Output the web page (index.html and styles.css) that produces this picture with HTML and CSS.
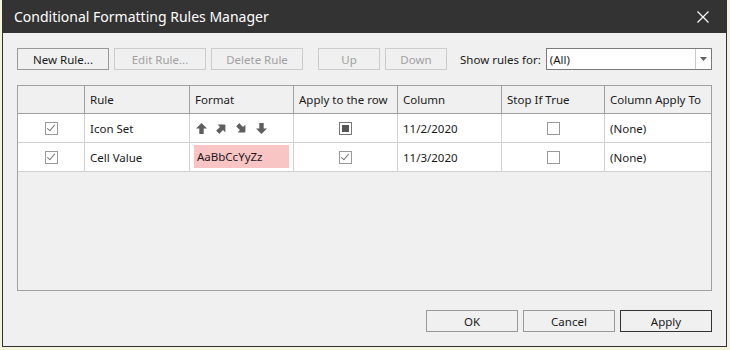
FILE: index.html
```html
<!DOCTYPE html>
<html lang="en">
<head>
  <meta charset="UTF-8">
  <title>Conditional Formatting Rules Manager</title>
  <link rel="stylesheet" href="styles.css">
</head>
<body>

<div class="dialog">
  <div class="titlebar">
    <span class="title">Conditional Formatting Rules Manager</span>
    <svg class="close" width="12" height="12" viewBox="0 0 12 12"><path d="M0.5 0.5 L11.5 11.5 M11.5 0.5 L0.5 11.5" stroke="#fff" stroke-width="1.2"/></svg>
  </div>

  <div class="content">
    <div class="toolbar">
      <button class="btn">New Rule...</button>
      <button class="btn disabled">Edit Rule...</button>
      <button class="btn disabled">Delete Rule</button>
      <button class="btn small disabled up">Up</button>
      <button class="btn small disabled">Down</button>
      <span class="label">Show rules for:</span>
      <div class="select">
        <span>(All)</span>
        <span class="arrow"><svg width="7" height="4" viewBox="0 0 7 4"><path d="M0 0 H7 L3.5 4 Z" fill="#606060"/></svg></span>
      </div>
    </div>

    <div class="grid">
      <div class="row head">
        <div class="cell"></div>
        <div class="cell">Rule</div>
        <div class="cell">Format</div>
        <div class="cell">Apply to the row</div>
        <div class="cell">Column</div>
        <div class="cell">Stop If True</div>
        <div class="cell">Column Apply To</div>
      </div>
      <div class="row">
        <div class="cell center"><span class="check on"></span></div>
        <div class="cell">Icon Set</div>
        <div class="cell icons">
          <svg width="11" height="11" viewBox="0 0 10 10"><path d="M5 0 L10 5 H7 V10 H3 V5 H0 Z" fill="#5f5f5f"/></svg>
          <svg width="11" height="11" viewBox="0 0 10 10" class="r45"><path d="M5 0 L10 5 H7 V10 H3 V5 H0 Z" fill="#5f5f5f"/></svg>
          <svg width="11" height="11" viewBox="0 0 10 10" class="r135"><path d="M5 0 L10 5 H7 V10 H3 V5 H0 Z" fill="#5f5f5f"/></svg>
          <svg width="11" height="11" viewBox="0 0 10 10" class="r180"><path d="M5 0 L10 5 H7 V10 H3 V5 H0 Z" fill="#5f5f5f"/></svg>
        </div>
        <div class="cell center"><span class="check mixed"></span></div>
        <div class="cell">11/2/2020</div>
        <div class="cell center"><span class="check"></span></div>
        <div class="cell">(None)</div>
      </div>
      <div class="row">
        <div class="cell center"><span class="check on"></span></div>
        <div class="cell">Cell Value</div>
        <div class="cell fmt"><span class="sample">AaBbCcYyZz</span></div>
        <div class="cell center"><span class="check on"></span></div>
        <div class="cell">11/3/2020</div>
        <div class="cell center"><span class="check"></span></div>
        <div class="cell">(None)</div>
      </div>
    </div>

    <div class="footer">
      <button class="btn">OK</button>
      <button class="btn">Cancel</button>
      <button class="btn default">Apply</button>
    </div>
  </div>
</div>

</body>
</html>
```

FILE: styles.css
```css
body { margin: 0; background: #f4f3dc; font-family: "Noto Sans", "Open Sans", sans-serif; font-size: 11.5px; color: #1a1a1a; }
.dialog { margin-left: 2px; width: 723px; height: 346px; border: 1px solid #333; border-top: none; background: #f0f0f0; display: flex; flex-direction: column; }
.titlebar { height: 33px; background: #333; display: flex; align-items: center; justify-content: space-between; padding: 0 17px 0 11px; }
.title { color: #fff; font-size: 14px; }
.content { padding: 15px 14px 0 14px; display: flex; flex-direction: column; flex: 1; }
.toolbar { display: flex; align-items: center; gap: 5px; height: 22px; }
.btn { flex-shrink: 0; width: 92px; height: 22px; padding: 0; margin: 0; background: #f0f0f0; border: 1px solid #999; font-family: inherit; font-size: 11.5px; color: #1a1a1a; }
.btn.disabled { border-color: #ccc; color: #a0a0a0; }
.btn.small { width: 62px; }
.btn.up { margin-left: 10px; }
.label { margin-left: 8px; white-space: nowrap; flex-shrink: 0; }
.select { flex: 1; min-width: 0; box-sizing: border-box; height: 22px; border: 1px solid #7a7a7a; background: #fff; display: flex; align-items: center; justify-content: space-between; padding-left: 3px; }
.select .arrow { width: 15px; height: 20px; border-left: 1px solid #ccc; display: flex; align-items: center; justify-content: center; }
.grid { margin-top: 15px; height: 204px; border: 1px solid #a0a0a0; background: #f0f0f0; }
.row { display: grid; grid-template-columns: 67px 105px 104px 104px 104px 103px 1fr; height: 29px; background: #fff; }
.row.head { background: #f0f0f0; height: 28px; }
.cell { border-right: 1px solid #d0d0d0; border-bottom: 1px solid #d0d0d0; display: flex; align-items: center; padding-left: 5px; white-space: nowrap; }
.row.head .cell { border-color: #a0a0a0; }
.cell:last-child { border-right: none; }
.center { justify-content: center; padding-left: 0; }
.check { width: 11px; height: 11px; border: 1px solid #999; background: #fff; display: inline-block; position: relative; }
.check.on::after { content: ""; position: absolute; left: 3px; top: 0px; width: 3px; height: 7px; border: solid #777; border-width: 0 1px 1px 0; transform: rotate(40deg); }
.check.mixed { border-color: #777; }
.check.mixed::after { content: ""; position: absolute; left: 2px; top: 2px; width: 7px; height: 7px; background: #555; }
.icons { gap: 9px; padding-left: 6px; }
.r45 { transform: rotate(45deg); }
.r135 { transform: rotate(135deg); }
.r180 { transform: rotate(180deg); }
.fmt { padding: 2px 4px 3px 4px; align-items: stretch; }
.sample { background: #f8c4c4; flex: 1; display: flex; align-items: center; padding-left: 3px; }
.footer { display: flex; justify-content: flex-end; gap: 5px; margin-top: 19px; }
.btn.default { border-color: #333; }
```
